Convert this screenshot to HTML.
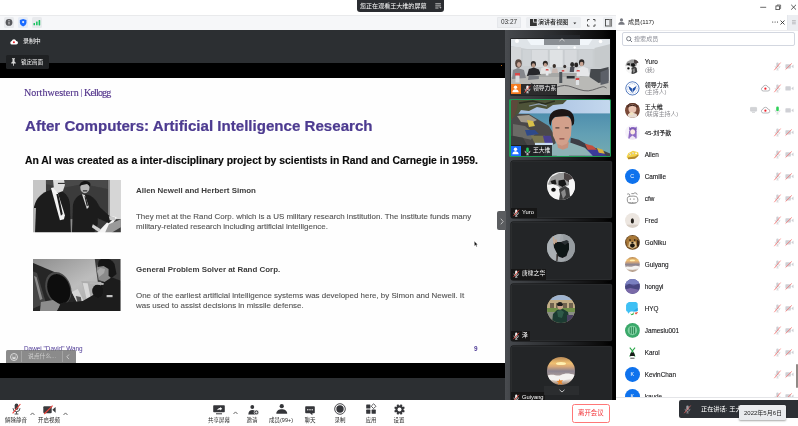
<!DOCTYPE html>
<html lang="zh">
<head>
<meta charset="utf-8">
<title>Meeting</title>
<style>
html,body{margin:0;padding:0;}
body{width:798px;height:426px;overflow:hidden;background:#fff;position:relative;font-family:"Liberation Sans","Noto Sans CJK SC",sans-serif;color:#222;}
.abs{position:absolute;}
.t{position:absolute;white-space:nowrap;line-height:1;}
.t,.bl,.row{will-change:transform;}
svg{position:absolute;overflow:visible;}
/* ---------- top ---------- */
#titlebar{left:0;top:0;width:798px;height:15px;background:#fff;}
#pill{left:357px;top:0;width:87px;height:11.5px;background:#2b2d31;border-radius:0 0 3px 3px;}
#toolbar{left:0;top:15px;width:617px;height:15px;background:#f6f7f9;border-top:1px solid #e9eaec;box-sizing:border-box;}
.tb-box{position:absolute;top:17px;height:10.5px;background:#e8eaed;border-radius:1.5px;}
/* ---------- main ---------- */
#main{left:0;top:30px;width:505px;height:370px;background:#2c2f32;}
#band1{left:0;top:63px;width:505px;height:15px;background:#000;}
#slide{left:0;top:78px;width:505px;height:285px;background:#fefefe;}
#band2{left:0;top:363px;width:505px;height:14.7px;background:#000;}
/* ---------- strip ---------- */
#strip{left:505px;top:30px;width:110.5px;height:370px;background:linear-gradient(to right,#494c50 0,#44474b 4%,#2a2c2f 45%,#0a0a0a 88%,#000 96%);}
.tile{position:absolute;left:510.5px;width:101.1px;height:57.2px;background:#232527;border-radius:2px;box-shadow:0 0 0 .5px #0c0c0c,inset 0 0 0 .6px #313335;overflow:hidden;}
.nm{position:absolute;left:0;bottom:0;height:10.5px;background:rgba(20,20,20,.85);color:#fff;font-size:5.8px;}
/* ---------- panel ---------- */
#panel{left:615.5px;top:15px;width:182.5px;height:411px;background:#fff;}
.row{position:absolute;left:0;width:182.5px;height:22px;}
.row .n{position:absolute;left:28.7px;font-size:6.4px;color:#141416;-webkit-text-stroke:.1px #141416;white-space:nowrap;line-height:1;}
.row .s{position:absolute;left:28.9px;font-size:5.9px;color:#8a8a8f;white-space:nowrap;line-height:1;}
.av{position:absolute;width:14.8px;height:14.8px;border-radius:50%;overflow:hidden;}
/* ---------- bottom ---------- */
#bottom{left:0;top:400px;width:615.5px;height:26px;background:#fff;}
.bl{position:absolute;top:417.9px;font-size:5.5px;color:#2a2a2a;white-space:nowrap;line-height:1;transform:translateX(-50%);}
</style>
</head>
<body>
<!-- TOP TITLE BAR -->
<div class="abs" id="titlebar"></div>
<div class="abs" id="pill"></div>
<div class="t" style="left:360.2px;top:3.1px;font-size:6.05px;color:#fff;">您正在观看王大维的屏幕</div>
<svg style="left:434.5px;top:3px" width="7" height="6" viewBox="0 0 7 6"><path d="M0.3 0.8h5.6M0.3 2.9h5.6M0.3 5h3.2" stroke="#e8e8e8" stroke-width="0.8" fill="none"/><path d="M4.3 4.3h2.2l-1.1 1.3z" fill="#e8e8e8"/></svg>
<!-- window controls -->
<svg style="left:758px;top:3px" width="40" height="9" viewBox="0 0 40 9"><path d="M2.2 4.3h6" stroke="#444" stroke-width="0.8"/><rect x="17.9" y="3" width="3.6" height="3.6" fill="none" stroke="#444" stroke-width="0.8"/><path d="M19 2.8v-.8h3.600v3.600h-.9" fill="none" stroke="#444" stroke-width="0.7"/><path d="M33.2 1.8l4.8 4.8M38 1.8l-4.8 4.8" stroke="#333" stroke-width="0.8"/></svg>

<!-- SECOND TOOLBAR -->
<div class="abs" id="toolbar"></div>
<div class="tb-box" style="left:4.2px;width:9.6px;"></div>
<div class="tb-box" style="left:18.2px;width:9.8px;background:#e6ecf6;"></div>
<div class="tb-box" style="left:32.2px;width:9.6px;"></div>
<svg style="left:0;top:15px" width="60" height="15" viewBox="0 15 60 15">
 <circle cx="9" cy="22.4" r="3.4" fill="#58595c"/><rect x="8.5" y="21.6" width="1" height="2.8" fill="#d8d8da"/><rect x="8.5" y="20" width="1" height="1" fill="#d8d8da"/>
 <path d="M23.15 18.9l3.3 1.1v2.6c0 1.9-1.5 3.2-3.3 3.8-1.8-.6-3.3-1.9-3.3-3.8V20z" fill="#1a6bff"/><circle cx="23.15" cy="22.1" r="1.1" fill="#e6ecf6"/>
 <rect x="33.5" y="22.9" width="1.5" height="2.4" rx=".4" fill="#14c15c"/><rect x="36.1" y="21.4" width="1.5" height="3.9" rx=".4" fill="#14c15c"/><rect x="38.6" y="19.9" width="1.6" height="5.5" rx=".4" fill="#14c15c"/>
</svg>
<!-- right side of toolbar -->
<div class="tb-box" style="left:497px;width:24px;top:17.2px;height:10.4px;background:#eceef1;box-shadow:inset 0 0 0 .5px #dfe1e5;"></div>
<div class="t" style="left:500.6px;top:19.4px;font-size:6.4px;color:#333;">03:27</div>
<div class="tb-box" style="left:526px;width:54.5px;top:17.2px;height:10.4px;background:#eceef1;"></div>
<svg style="left:529.5px;top:19px" width="8" height="7" viewBox="0 0 8 7"><path d="M0 0h3.2v3.6h3.6V7H0z" fill="#333"/><rect x="4" y="0" width="2.8" height="2.8" fill="#333"/></svg>
<div class="t" style="left:538.4px;top:19.2px;font-size:6.05px;color:#222;font-weight:500;">演讲者视图</div>
<svg style="left:573px;top:21.6px" width="4" height="3" viewBox="0 0 4 3"><path d="M0.3 0.4h3L1.8 2.2z" fill="#333"/></svg>
<svg style="left:587px;top:18.8px" width="9" height="8" viewBox="0 0 9 8"><path d="M0.5 2.4V0.5h2M6 0.5h2v1.9M8 5.2v1.9H6M2.5 7.1h-2V5.2" fill="none" stroke="#444" stroke-width="0.9"/></svg>
<div class="tb-box" style="left:602.5px;width:10.5px;top:17.2px;height:10.4px;background:#eceef1;"></div>
<svg style="left:604.5px;top:18.8px" width="7" height="8" viewBox="0 0 7 8"><rect x="0.4" y="0.4" width="6.2" height="6.6" fill="none" stroke="#333" stroke-width="0.8"/><rect x="4.2" y="0.4" width="2.4" height="6.6" fill="#9a9a9a"/></svg>

<!-- MAIN DARK AREA -->
<div class="abs" id="main"></div>
<div class="abs" id="band1"></div>
<div class="abs" id="slide"></div>
<!-- slide content -->
<div class="t" style="left:24.4px;top:88px;font-family:'Liberation Serif',serif;font-size:10.05px;color:#4e2f88;-webkit-text-stroke:.12px #4e2f88;">Northwestern</div>
<div class="abs" style="left:81.1px;top:89px;width:.5px;height:8px;background:#a595c8;"></div>
<div class="t" style="left:83.7px;top:88px;font-family:'Liberation Serif',serif;font-size:10.05px;color:#4e2f88;-webkit-text-stroke:.12px #4e2f88;letter-spacing:-.85px;">Kellogg</div>
<div class="t" style="left:24.8px;top:117.7px;font-size:15.1px;font-weight:bold;color:#4d3b90;-webkit-text-stroke:.22px #4d3b90;">After Computers: Artificial Intelligence Research</div>
<div class="t" style="left:24.8px;top:156.3px;font-size:10.4px;font-weight:bold;color:#0a0a0a;-webkit-text-stroke:.15px #0a0a0a;">An AI was created as a inter-disciplinary project by scientists in Rand and Carnegie in 1959.</div>
<div class="t" style="left:135.7px;top:186.6px;font-size:7.95px;font-weight:bold;color:#3c3c3c;">Allen Newell and Herbert Simon</div>
<div class="t" style="left:135.7px;top:211.9px;font-size:7.95px;line-height:9.75px;color:#515151;-webkit-text-stroke:.1px #515151;white-space:pre;">They met at the Rand Corp. which is a US military research institution. The institute funds many
military-related research including artificial intelligence.</div>
<div class="t" style="left:135.7px;top:266.1px;font-size:7.95px;font-weight:bold;color:#3c3c3c;">General Problem Solver at Rand Corp.</div>
<div class="t" style="left:135.7px;top:291.4px;font-size:7.95px;line-height:9.6px;color:#515151;-webkit-text-stroke:.1px #515151;white-space:pre;">One of the earliest artificial intelligence systems was developed here, by Simon and Newell. It
was used to assist decisions in missile defense.</div>
<div class="t" style="left:24.3px;top:346px;font-size:6.4px;color:#4e3a96;">Dawei "David" Wang</div>
<div class="t" style="left:474.3px;top:346px;font-size:6.4px;font-weight:bold;color:#4e3a96;">9</div>
<!-- cursor -->
<svg style="left:473.600px;top:240.600px" width="4" height="6" viewBox="0 0 4 6"><path d="M.3.2l3.300 3.400-1.300.1.900 1.800-.7.300-.9-1.800-1.100.9z" fill="#111" stroke="#fff" stroke-width=".25"/></svg>
<!-- emoji bar -->
<div class="abs" style="left:6px;top:349.8px;width:69.8px;height:13.2px;background:rgba(120,120,120,.86);border-radius:1.5px 1.5px 0 0;"></div>
<div class="abs" style="left:21.4px;top:351px;width:.6px;height:11px;background:#a4a4a4;"></div>
<div class="abs" style="left:61.5px;top:351px;width:.6px;height:11px;background:#a4a4a4;"></div>
<svg style="left:10.4px;top:352.7px" width="8" height="8" viewBox="0 0 8 8"><circle cx="4" cy="4" r="3.5" fill="none" stroke="#e2e2e2" stroke-width=".9"/><path d="M2.100 4.300h3.800a1.900 1.900 0 0 1-3.800 0z" fill="#e2e2e2"/><circle cx="2.800" cy="2.900" r=".5" fill="#e2e2e2"/><circle cx="5.200" cy="2.900" r=".5" fill="#e2e2e2"/></svg>
<div class="t" style="left:28.200px;top:353.600px;font-size:5.800px;color:#cfcfcf;">说点什么...</div>
<svg style="left:66px;top:354px" width="4" height="6" viewBox="0 0 4 6"><path d="M3 .5L.8 2.800 3 5.100" fill="none" stroke="#d8d8d8" stroke-width=".8"/></svg>
<!-- photo 1 -->
<svg id="ph1" style="left:33.2px;top:180px" width="87.8" height="52.2" viewBox="0 0 88 52" preserveAspectRatio="none">
<defs><filter id="b1" x="-5%" y="-5%" width="110%" height="110%"><feGaussianBlur stdDeviation="0.5"/></filter><clipPath id="c1"><rect width="88" height="52"/></clipPath></defs>
<g clip-path="url(#c1)"><rect width="88" height="52" fill="#c6c6c6"/>
<g filter="url(#b1)">
<rect x="13" y="-1" width="62.5" height="41" fill="#3b3b3b"/>
<path d="M13 -1h62v10L50 4 30 8 13 4z" fill="#484848"/>
<rect x="75.5" y="-1" width="1.6" height="41" fill="#777"/>
<rect x="77" y="-1" width="12" height="40" fill="#d6d6d6"/>
<rect x="34" y="39" width="55" height="14" fill="#3a3a3a"/>
<rect x="34" y="39" width="7" height="14" fill="#8c8c8c"/>
<path d="M64 53l16-17 4 1-10 16z" fill="#f4f4f4"/>
<path d="M76 44l12-5v8l-10 6h-6z" fill="#9a9a9a"/>
<!-- man 2 -->
<path d="M39 53l1-28c1-6 5-10 10-11l6 1c5 2 8 6 11 12l10 9 3 3-4 4-11-5 0 6-4 9z" fill="#1f1f1f"/>
<path d="M49 14l3 1 4 12-2 2z" fill="#d8d8d8"/>
<path d="M51.5 16l1.2 .4 2.4 9-1.2 1z" fill="#222"/>
<ellipse cx="52" cy="7.6" rx="4.6" ry="5.6" fill="#b8b8b8"/>
<path d="M46.6 6c0-5 9-7 11-2l-.4 2.4-3-2.4-5 1z" fill="#161616"/>
<path d="M50 10.8h4.4" stroke="#3a3a3a" stroke-width="1.3"/>
<path d="M60 44l8 5-2 3-7-5z" fill="#d0d0d0"/>
<path d="M76 36l6 1 1 3-6 0z" fill="#c8c8c8"/>
<!-- man 1 -->
<path d="M0 53l1-26C3 18 9 12 18 10l10 1c5 2 8 6 9 13l1 29z" fill="#1b1b1b"/>
<path d="M18 8l5-1 9 28-1 4-4 1z" fill="#f3f3f3"/>
<path d="M23.4 14l2 0 4.400 20-1.8 1.600z" fill="#1c1c1c"/>
<path d="M20 -1h11l1 6-2 6-5 2-4-4z" fill="#dedede"/>
<path d="M25 3.400h7" stroke="#2a2a2a" stroke-width="1.100"/>
<path d="M0 28l3 0 -1 25H0z" fill="#b5b5b5"/>
</g></g></svg>
<!-- photo 2 -->
<svg id="ph2" style="left:33.4px;top:259px" width="87.5" height="52" viewBox="0 0 88 52" preserveAspectRatio="none">
<defs><clipPath id="c2"><rect width="88" height="52"/></clipPath>
<linearGradient id="g2" x1="0" y1="0" x2="1" y2="1"><stop offset="0" stop-color="#8d8d8d"/><stop offset=".5" stop-color="#bdbdbd"/><stop offset="1" stop-color="#a2a2a2"/></linearGradient></defs>
<g clip-path="url(#c2)"><rect width="88" height="52" fill="url(#g2)"/>
<g filter="url(#b1)">
<path d="M62 -1h27v30H66z" fill="#3a3a3a"/>
<!-- console -->
<path d="M-1 3.500l32 13.500 16 32-4 5H-1z" fill="#272727"/>
<path d="M-1 12l5 2 9 30-14 6z" fill="#444"/>
<path d="M1 17l2.500 1 6 22-2.500 1z" fill="#c9c9c9" opacity=".55"/>
<ellipse cx="25.500" cy="29.500" rx="12.600" ry="17" fill="#4a4a4a" transform="rotate(-20 25.500 29.500)"/>
<ellipse cx="26" cy="30" rx="11.200" ry="15.400" fill="#101010" transform="rotate(-20 26 30)"/>
<path d="M8 43l12-2 8 5-4 6H7z" fill="#8c8c8c"/>
<!-- second console -->
<path d="M48.500 22l20 1 3 17-16 3z" fill="#adadad"/>
<path d="M50 24l5 .300 3 15-4 1z" fill="#d8d8d8"/>
<path d="M39 33l6-3 6 12-6 3z" fill="#d6d6d6"/>
<path d="M43 37l5 1 1 5-4 1z" fill="#555"/>
<!-- man -->
<path d="M24 53l4-9 22-2 14-8 6-12 8-4 11 4v31z" fill="#1c1c1c"/>
<path d="M64 10c0-5 5-8 10-7l4 6 0 10-6 4-6-2-1-5z" fill="#8a8a8a"/>
<path d="M64.500 12l3-3 5 1-1 4-5 4z" fill="#a8a8a8"/>
<path d="M66 2c4-4 13-3 16 3l2 10-5 4-3-2 0-7-5-3-6 1z" fill="#181818"/>
<path d="M74 36h6v2.200h-6z" fill="#c2c2c2"/>
<ellipse cx="65" cy="32" rx="5.500" ry="6.500" fill="#151515"/><path d="M57 24l14 1" stroke="#b5b5b5" stroke-width="2"/>
</g></g></svg>
<div class="abs" id="band2"></div>
<div class="abs" style="left:500.8px;top:64.8px;width:1.6px;height:1.6px;border-radius:50%;background:#f08a24;"></div>
<!-- recording indicator -->
<svg style="left:9.9px;top:38.9px" width="8" height="5.8" viewBox="0 0 9 6.5"><path d="M2.2 6.2a2 2 0 0 1-.3-3.95A2.7 2.7 0 0 1 7 2.1a2.05 2.05 0 0 1-.1 4.1z" fill="#fff"/><circle cx="4.4" cy="3.7" r="1.15" fill="#e8212b"/></svg>
<div class="t" style="left:23.4px;top:39.3px;font-size:5.9px;color:#fff;">录制中</div>
<!-- pin tooltip -->
<div class="abs" style="left:5.6px;top:55px;width:43px;height:14.2px;background:#1f2123;border-radius:1.5px;"></div>
<svg style="left:11px;top:58.2px" width="5" height="8" viewBox="0 0 5 8"><path d="M1 0.2h3v0.8H3.5v2.6l1.3 1.2v0.6H2.9V7.6L2.5 8l-.4-.4V5.4H0.2v-.6l1.3-1.2V1H1z" fill="#d8d8d8"/></svg>
<div class="t" style="left:21px;top:60px;font-size:5.5px;color:#fff;">锁定画面</div>

<!-- VIDEO STRIP -->
<div class="abs" id="strip"></div>
<!-- tile 1 : conference room -->
<div class="tile" style="top:38.5px;left:510.5px;width:99.5px;height:56px;border-radius:0;">
<svg style="left:0;top:0" width="99.5" height="56" viewBox="0 0 100 56" preserveAspectRatio="none">
<defs><filter id="b2" x="-5%" y="-5%" width="110%" height="110%"><feGaussianBlur stdDeviation="0.7"/></filter></defs>
<rect width="100" height="56" fill="#c9cdd0"/>
<g filter="url(#b2)">
<path d="M0 0h100v6L84 10H16L0 7z" fill="#dfe4e8"/>
<path d="M16 0h66l-4 6H20z" fill="#f1f6fa"/>
<circle cx="6" cy="2" r="2" fill="#fff"/><circle cx="90" cy="2.500" r="1.800" fill="#fff"/><circle cx="48" cy="8.500" r="1.200" fill="#fff"/><circle cx="64" cy="8.500" r="1.200" fill="#fff"/>
<rect x="0" y="8" width="10" height="22" fill="#d4d7d9"/>
<rect x="12" y="11" width="8" height="16" fill="#cfd3d6"/>
<rect x="21" y="11" width="16" height="17" fill="#d9dcdf"/>
<rect x="39" y="11" width="13" height="17" fill="#dfe2e4"/>
<rect x="54" y="11" width="12" height="17" fill="#d6d9dc"/>
<rect x="68" y="11" width="14" height="17" fill="#cdd1d4"/>
<path d="M84 9l16-4v26l-16-3z" fill="#c6cacc"/>
<!-- table -->
<path d="M0 38l30-4h44l26 8v14H0z" fill="#b9b9b6"/>
<path d="M30 34h44l10 4H16z" fill="#a7a8a6"/>
<!-- people -->
<ellipse cx="7.500" cy="24.500" rx="3.300" ry="4.200" fill="#5a4840"/><ellipse cx="8" cy="25.500" rx="2" ry="2.600" fill="#c9a596"/>
<path d="M1 40l1-9 5-2 6 2 2 8z" fill="#85878c"/>
<ellipse cx="22.500" cy="25" rx="2.600" ry="3" fill="#2c2826"/><ellipse cx="22.500" cy="26.500" rx="1.800" ry="2.200" fill="#b99886"/>
<path d="M16 37l2-7 5-1.500 5 2 2 5z" fill="#26282c"/>
<ellipse cx="34.500" cy="24.500" rx="2.500" ry="2.800" fill="#2a2624"/><ellipse cx="34.500" cy="26" rx="1.700" ry="2" fill="#c09c8a"/>
<path d="M29 35l1.500-6 4-1.500 4.500 2 1.500 5z" fill="#e4e4e2"/>
<ellipse cx="43.500" cy="27" rx="1.700" ry="2" fill="#3a302c"/><path d="M41 34l.8-4.500h4.600l1 4.500z" fill="#c8b8b2"/>
<ellipse cx="54" cy="27.500" rx="1.500" ry="1.800" fill="#3a3432"/><path d="M52 33l.5-3.500h3.400l.6 3.500z" fill="#d6cfcb"/>
<ellipse cx="61.500" cy="25.500" rx="2" ry="2.500" fill="#2c2a2a"/><path d="M59 33l.5-5h4.500l1 5z" fill="#4a4c52"/>
<ellipse cx="65.500" cy="26" rx="2" ry="2.400" fill="#262424"/><path d="M63 34l.8-5.500h4.600l1 5.500z" fill="#d9dadc"/>
<ellipse cx="71" cy="23.500" rx="2.700" ry="3.200" fill="#2a2626"/><ellipse cx="71" cy="25" rx="1.900" ry="2.300" fill="#c7a392"/>
<path d="M66 37l2-8 4.500-1.500 5 2 1.500 8z" fill="#e6e7e9"/>
<!-- chairs right -->
<path d="M80 30h10l8-2v14l-10 2-9-6z" fill="#45484d"/>
<path d="M90 33l8-3v14l-8 2z" fill="#5c6067"/>
<!-- bottles / red bits -->
<rect x="4" y="34" width="5" height="3" fill="#d84848"/><rect x="4.500" y="36.500" width="4" height="7" fill="#d9dde0"/>
<rect x="35" y="30" width="2.600" height="2" fill="#d65050"/><rect x="35" y="31.500" width="2.600" height="5" fill="#e6e8ea"/>
<rect x="66" y="31" width="3" height="2" fill="#d65050"/><rect x="66" y="32.500" width="3" height="5" fill="#e3e5e8"/>
<rect x="65" y="39" width="3.600" height="2.500" fill="#d44a4a"/><rect x="65.200" y="41" width="3.200" height="5" fill="#dfe2e5"/>
<rect x="51" y="31" width="2.500" height="1.600" fill="#d65050"/>
<!-- center equipment / cable -->
<rect x="48.500" y="33" width="3" height="11" fill="#50545a"/>
<path d="M56 37h8v2.500h-8z" fill="#2c2e32"/>
<path d="M18 36l10 1 0 3-11 1z" fill="#777a80"/>
<path d="M20 44c10 8 20 6 30 3s20 8 32 4 10-4 14-2" fill="none" stroke="#4a4a4c" stroke-width=".8"/>
</g>
</svg>
<div class="abs" style="left:0;bottom:0;width:46px;height:10.800px;background:rgba(24,24,26,.88);"></div>
<div class="abs" style="left:.300px;bottom:.600px;width:10px;height:9.800px;background:#f47b20;"></div>
<svg style="left:1.800px;top:46.500px" width="7" height="8" viewBox="0 0 7 8"><circle cx="3.500" cy="2.300" r="1.700" fill="#fff"/><path d="M.3 7.300C.3 5 2 4.200 3.500 4.200s3.200.8 3.200 3.100z" fill="#fff"/></svg>
<svg class="mic-m" style="left:13px;top:46.300px" width="7" height="8.500" viewBox="0 0 7 8.500"><rect x="2.300" y=".5" width="2.400" height="4.600" rx="1.200" fill="#f2f2f2"/><path d="M1 3.800a2.500 2.500 0 0 0 5 0M3.500 6.300v1.400M2.200 7.800h2.600" fill="none" stroke="#f2f2f2" stroke-width=".7"/><path d="M.4 7.600L6.400.8" stroke="#f0453a" stroke-width=".9"/></svg>
<div class="t" style="left:22.600px;top:47.800px;font-size:5.800px;color:#fff;">领导力系</div>
</div>
<!-- collapse handle -->
<div class="abs" style="left:544.100px;top:34.500px;width:36px;height:10.200px;background:rgba(44,48,54,.52);"></div>
<svg style="left:559px;top:37.900px" width="6" height="4" viewBox="0 0 6 4"><path d="M.5 3L3 .8 5.500 3" fill="none" stroke="#e4e4e4" stroke-width=".8"/></svg>
<!-- tile 2 : beach speaker -->
<div class="abs" style="left:509.300px;top:99.300px;width:102.200px;height:58px;background:#1f9a55;border-radius:1.500px;"></div>
<div class="tile" style="top:100.400px;left:510.500px;width:99.800px;height:55.800px;border-radius:.5px;box-shadow:none;">
<svg style="left:0;top:0" width="99.800" height="55.800" viewBox="0 0 100 56" preserveAspectRatio="none">
<defs><linearGradient id="sky" x1="0" y1="0" x2="1" y2="0"><stop offset="0" stop-color="#9fb9dc"/><stop offset="1" stop-color="#c4d8ee"/></linearGradient>
<linearGradient id="sea" x1="0" y1="0" x2="0" y2="1"><stop offset="0" stop-color="#4f8fae"/><stop offset=".5" stop-color="#63a0b4"/><stop offset="1" stop-color="#74aab0"/></linearGradient></defs>
<rect width="100" height="14" fill="url(#sky)"/>
<rect y="13.500" width="100" height="43" fill="url(#sea)"/>
<g filter="url(#b2)">
<!-- tree -->
<path d="M0 0h56l-4 4-10 1-6 4-10-2-8 4-8-1-4 6-6 4z" fill="#4e5238"/>
<path d="M0 0h7l-1 8-3 10-3 2z" fill="#5d4a3a"/>
<path d="M8 3l14-2 12 3 10-3" fill="none" stroke="#2c2f20" stroke-width="1.500"/>
<path d="M18 6l10-2 8 2" fill="none" stroke="#8fa0b0" stroke-width="1.200"/>
<!-- rocks left -->
<path d="M0 20l6-6 12 0 10 6 10 6 6 10 2 20H0z" fill="#4b4a48"/>
<path d="M6 16l12-1 8 5-6 3-10-1z" fill="#a39a8c"/>
<path d="M2 24l12 2 10 8-4 6-18-4z" fill="#6a6a66"/>
<path d="M16 20l6 1 2 5-6 1z" fill="#d8c048"/>
<path d="M14 30l10 0 4 4-12 2z" fill="#2f4a8a"/>
<path d="M20 36l14 0 6 8-14 4z" fill="#7a7650"/>
<path d="M32 36l8 0 2 8-8 0z" fill="#4a3f90"/>
<path d="M0 36l12 2 10 18H0z" fill="#3a3c3e"/>
<path d="M24 43h18v2.500H24z" fill="#c8dcf0"/>
<!-- rocks right -->
<path d="M60 38l8 2 10 6 12 4 10 4v3H58z" fill="#3c3c44"/>
<path d="M74 44l8 2 6 6-10 0z" fill="#c4503c"/>
<path d="M76 50l12 0 8 6H74z" fill="#3a3a9a"/>
<path d="M86 48l6 2 2 4-6-1z" fill="#d8b040"/>
<!-- person -->
<path d="M33 56l3-8 10-5h14l14 5 8 8z" fill="#8eb2b6"/>
<path d="M46 42h12l-1 6-5 2-5-2z" fill="#c7917c"/>
<path d="M41 22c0-8 20-8 20 0l-1 14-4 8-5 2-5-2-4-8z" fill="#d2a08b"/>
<path d="M38.500 24c-2-10 4-15 12.500-15s14 5 12 15l-2 2c0-6-2-9-4-10l-13 1c-3 2-4 5-4 9z" fill="#1b1718"/>
<path d="M44.500 28h4M54 28h4" stroke="#3a2a26" stroke-width="1"/>
<path d="M48.500 39h5" stroke="#8a4a44" stroke-width="1.200"/>
</g>
</svg>
<div class="abs" style="left:0;bottom:0;width:41px;height:10.800px;background:rgba(26,28,30,.85);"></div>
<div class="abs" style="left:.300px;bottom:.500px;width:10px;height:9.800px;background:#1a6dff;"></div>
<svg style="left:1.800px;top:46.300px" width="7" height="8" viewBox="0 0 7 8"><circle cx="3.500" cy="2.300" r="1.700" fill="#fff"/><path d="M.3 7.300C.3 5 2 4.200 3.500 4.200s3.200.8 3.200 3.100z" fill="#fff"/></svg>
<svg style="left:13px;top:46.200px" width="7" height="8.500" viewBox="0 0 7 8.500"><rect x="2.200" y=".4" width="2.600" height="4.800" rx="1.300" fill="#21c45a"/><path d="M1 3.800a2.500 2.500 0 0 0 5 0M3.500 6.300v1.400M2.200 7.800h2.600" fill="none" stroke="#f2f2f2" stroke-width=".7"/></svg>
<div class="t" style="left:22.600px;top:47.600px;font-size:5.800px;color:#fff;">王大维</div>
</div>

<div class="tile" style="top:161.2px;">
<svg style="left:36px;top:11.200px" width="28" height="28" viewBox="0 0 28 28"><defs><clipPath id="cy"><circle cx="14" cy="14" r="14"/></clipPath></defs><g clip-path="url(#cy)"><rect width="28" height="28" fill="#f3f3f3"/><g filter="url(#b2)">
<path d="M1 12l3-7 8-4 8 0 4 4-2 8-8 4-10 0z" fill="#9b9b9b"/>
<path d="M17 1l6 1 3 5-3 4-6-4z" fill="#4a4242"/>
<path d="M3.500 9l5-1.500 1 4.500-4 1.500z" fill="#1e1e1e"/>
<path d="M11.500 8.500l6-1 2 5-4 2.500-4-2z" fill="#161616"/>
<path d="M1 13l5-1 5 2 4 4-1 7-6 2-6-4z" fill="#f5f5f5"/>
<ellipse cx="6.500" cy="17.800" rx="2.300" ry="2" fill="#0e0e0e"/>
<path d="M12 17l6-3 5 3 1 8-6 4-6-1 1-6z" fill="#3c3c3c"/>
<path d="M14 20l4-3 1 6-3 4z" fill="#8a8a8a"/>
<path d="M22 8l6-2 0 18-5 0-1-8z" fill="#f6f6f6"/>
</g></g></svg>
<div class="nm" style="width:26px;"><svg style="left:2.800px;top:1.400px" width="6.500" height="8" viewBox="0 0 7 8.500"><rect x="2.300" y=".5" width="2.400" height="4.600" rx="1.200" fill="#f2f2f2"/><path d="M1 3.800a2.500 2.500 0 0 0 5 0M3.500 6.300v1.400M2.200 7.800h2.600" fill="none" stroke="#f2f2f2" stroke-width=".7"/><path d="M.4 7.600L6.400.8" stroke="#f0453a" stroke-width=".9"/></svg><span class="t" style="left:11.600px;top:2.400px;">Yuro</span></div>
</div>
<div class="tile" style="top:222.4px;">
<svg style="left:36px;top:11.200px" width="28" height="28" viewBox="0 0 28 28"><defs><clipPath id="ct"><circle cx="14" cy="14" r="14"/></clipPath></defs><g clip-path="url(#ct)"><rect width="28" height="28" fill="#a1a7ab"/><g filter="url(#b2)">
<path d="M0 0h14l-6 28H0z" fill="#aab0b4"/>
<path d="M16 0h12v28H18z" fill="#969ca0"/>
<path d="M6.500 9.500l3-1.500 5 0 5-1.500 2.500 3 0 6-1.500 3.500-1 3-4 2-4-1.500-2.500-5-2-4z" fill="#111316"/>
<path d="M14 8l6-2 2 2-4 3z" fill="#2c3034"/>
<path d="M5.800 3l1.200 0 1.200 7-1.500 .5z" fill="#c9a98e"/>
<path d="M8 5.500l1.800 0 .3 3-1.800 .5z" fill="#c4a288"/>
<path d="M9.500 20l1.600 0 -.6 7-1.200 0z" fill="#2a2624"/>
</g></g></svg>
<div class="nm" style="width:35.5px;"><svg style="left:2.800px;top:1.400px" width="6.500" height="8" viewBox="0 0 7 8.500"><rect x="2.300" y=".5" width="2.400" height="4.600" rx="1.200" fill="#f2f2f2"/><path d="M1 3.800a2.500 2.500 0 0 0 5 0M3.500 6.300v1.400M2.200 7.800h2.600" fill="none" stroke="#f2f2f2" stroke-width=".7"/><path d="M.4 7.600L6.400.8" stroke="#f0453a" stroke-width=".9"/></svg><span class="t" style="left:11.600px;top:2.400px;">唐棣之华</span></div>
</div>
<div class="tile" style="top:284.2px;">
<svg style="left:36px;top:11.200px" width="28" height="28" viewBox="0 0 28 28"><defs><clipPath id="cz"><circle cx="14" cy="14" r="14"/></clipPath></defs><g clip-path="url(#cz)"><rect width="28" height="28" fill="#b9a98a"/><g filter="url(#b2)">
<rect x="0" y="0" width="28" height="6" fill="#9fb4d0"/>
<rect x="0" y="5" width="28" height="9" fill="#c2ad86"/>
<path d="M3 8h4v5H3zM9 8h4v5H9zM16 8h4v5h-4zM22 8h4v5h-4z" fill="#6f6450"/>
<rect x="0" y="13" width="28" height="5" fill="#6f8f4a"/>
<rect x="0" y="17" width="28" height="11" fill="#8a8f86"/>
<path d="M5 28l1-9 4-4 6-1 5 3 2 11z" fill="#1d3a30"/>
<path d="M10 16l4-1 3 2-2 6-4-1z" fill="#2f5a48"/>
<ellipse cx="13" cy="11.500" rx="2.600" ry="3" fill="#c9a088"/>
<path d="M10 10c0-4 6-4 6 0l-1 1h-4z" fill="#1a1a1a"/>
<path d="M20 20l6 0 2 8h-8z" fill="#4a4060"/>
</g></g></svg>
<div class="nm" style="width:19.2px;"><svg style="left:2.800px;top:1.400px" width="6.500" height="8" viewBox="0 0 7 8.500"><rect x="2.300" y=".5" width="2.400" height="4.600" rx="1.200" fill="#f2f2f2"/><path d="M1 3.800a2.500 2.500 0 0 0 5 0M3.500 6.300v1.400M2.200 7.800h2.600" fill="none" stroke="#f2f2f2" stroke-width=".7"/><path d="M.4 7.600L6.400.8" stroke="#f0453a" stroke-width=".9"/></svg><span class="t" style="left:11.600px;top:2.400px;">泽</span></div>
</div>
<div class="tile" style="top:345.8px;">
<svg style="left:36px;top:11.200px" width="28" height="28" viewBox="0 0 28 28"><defs><clipPath id="cg"><circle cx="14" cy="14" r="14"/></clipPath>
<linearGradient id="sun" x1="0" y1="0" x2="0" y2="1"><stop offset="0" stop-color="#b98a58"/><stop offset=".22" stop-color="#f0c070"/><stop offset=".34" stop-color="#d8a878"/><stop offset=".5" stop-color="#8c8490"/><stop offset=".66" stop-color="#a89a98"/><stop offset=".8" stop-color="#e6e0dc"/><stop offset="1" stop-color="#9a7a60"/></linearGradient></defs>
<g clip-path="url(#cg)"><rect width="28" height="28" fill="url(#sun)"/><g filter="url(#b2)">
<ellipse cx="14" cy="6.500" rx="5" ry="1.600" fill="#fff0b0"/>
<path d="M0 19c6-3 10 1 14-1s8-2 14 0v4c-6-1-10 2-14 2S4 22 0 23z" fill="#f4f2f0"/>
<path d="M12 22l1.500 1.500 2.500-.5-1.500 2 1 2.500-2.500-1-2 1.500.5-2.500-2-1.500 2.500-.300z" fill="#e8862a"/>
</g></g></svg>
<div class="nm" style="width:34.5px;"><svg style="left:2.800px;top:1.400px" width="6.500" height="8" viewBox="0 0 7 8.500"><rect x="2.300" y=".5" width="2.400" height="4.600" rx="1.200" fill="#f2f2f2"/><path d="M1 3.800a2.500 2.500 0 0 0 5 0M3.500 6.300v1.400M2.200 7.800h2.600" fill="none" stroke="#f2f2f2" stroke-width=".7"/><path d="M.4 7.600L6.400.8" stroke="#f0453a" stroke-width=".9"/></svg><span class="t" style="left:11.600px;top:2.400px;">Guiyang</span></div>
</div>
<!-- side handle -->
<div class="abs" style="left:497.400px;top:211px;width:8.600px;height:19.400px;background:#5b5d60;border-radius:2px 0 0 2px;"></div>
<svg style="left:499.800px;top:217.500px" width="4" height="7" viewBox="0 0 4 7"><path d="M.8.7L3.200 3.500.8 6.300" fill="none" stroke="#d0d0d0" stroke-width=".8"/></svg>
<!-- down handle -->
<div class="abs" style="left:543.700px;top:385.500px;width:35.700px;height:9.200px;background:rgba(44,46,48,.92);"></div>
<svg style="left:558.500px;top:388.600px" width="6" height="4" viewBox="0 0 6 4"><path d="M.5 .8L3 3 5.500 .8" fill="none" stroke="#e4e4e4" stroke-width=".8"/></svg>
<!-- MEMBER PANEL -->
<div class="abs" id="panel"></div>
<!-- panel header -->
<svg style="left:618.300px;top:18.300px" width="7" height="7" viewBox="0 0 7 7"><circle cx="3.500" cy="1.900" r="1.600" fill="#777980"/><path d="M.3 6.700C.3 4.500 2 3.800 3.500 3.800s3.200.7 3.200 2.900z" fill="#777980"/></svg>
<div class="t" style="left:628.300px;top:19px;font-size:6.100px;color:#222;">成员(117)</div>
<svg style="left:772px;top:21.300px" width="6" height="2" viewBox="0 0 6 2"><circle cx=".7" cy="1" r=".58" fill="#2a2a2a"/><circle cx="3.100" cy="1" r=".58" fill="#2a2a2a"/><circle cx="5.500" cy="1" r=".58" fill="#2a2a2a"/></svg>
<svg style="left:780.300px;top:20px" width="5" height="5" viewBox="0 0 5 5"><path d="M.5.5l4 4M4.500.5l-4 4" stroke="#222" stroke-width=".8"/></svg>
<div class="abs" style="left:787.300px;top:15.300px;width:10.700px;height:14.500px;background:#eceef2;box-shadow:inset .5px 0 0 #dcdfe6;"></div>
<svg style="left:792.200px;top:20px" width="4" height="5" viewBox="0 0 4 5"><path d="M0 .6h3.800M0 2.200h3.800M0 3.800h3.800" stroke="#a8a8ac" stroke-width=".7"/></svg>
<div class="abs" style="left:615.500px;top:30px;width:182.500px;height:.5px;background:#ececee;"></div>
<div class="abs" style="left:621.800px;top:31.700px;width:173.400px;height:14.800px;box-sizing:border-box;border:.7px solid #d3d7e0;border-radius:2px;background:#fff;"></div>
<svg style="left:625.800px;top:36px" width="6.500" height="6.500" viewBox="0 0 6.500 6.500"><circle cx="2.700" cy="2.700" r="2.100" fill="none" stroke="#5a5f6a" stroke-width=".8"/><path d="M4.300 4.300L6 6" stroke="#5a5f6a" stroke-width=".9"/></svg>
<div class="t" style="left:633.600px;top:36px;font-size:6.100px;color:#8e9099;">搜索成员</div>
<div class="row" style="left:615.500px;top:55.3px;"><div class="av" style="left:9.300px;top:3.900px;background:#fff;"><svg style="left:0;top:0" width="14.800" height="14.800" viewBox="0 0 28 28"><rect width="28" height="28" fill="#f3f3f3"/><g filter="url(#b2)">
<path d="M1 12l3-7 8-4 8 0 4 4-2 8-8 4-10 0z" fill="#9b9b9b"/>
<path d="M17 1l6 1 3 5-3 4-6-4z" fill="#4a4242"/>
<path d="M3.500 9l5-1.500 1 4.500-4 1.500z" fill="#1e1e1e"/>
<path d="M11.500 8.500l6-1 2 5-4 2.500-4-2z" fill="#161616"/>
<path d="M1 13l5-1 5 2 4 4-1 7-6 2-6-4z" fill="#f5f5f5"/>
<ellipse cx="6.500" cy="17.800" rx="2.300" ry="2" fill="#0e0e0e"/>
<path d="M12 17l6-3 5 3 1 8-6 4-6-1 1-6z" fill="#3c3c3c"/>
<path d="M14 20l4-3 1 6-3 4z" fill="#8a8a8a"/>
<path d="M22 8l6-2 0 18-5 0-1-8z" fill="#f6f6f6"/>
</g></svg></div><span class="n" style="top:4.1px;">Yuro</span><span class="s" style="top:12.9px;">(我)</span></div>
<svg style="left:773.5px;top:61.5px" width="7" height="9" viewBox="0 0 7 9"><rect x="2.300" y=".6" width="2.400" height="4.600" rx="1.200" fill="#cdced3"/><path d="M1 3.900a2.500 2.500 0 0 0 5 0M3.500 6.400v1.500M2.300 8h2.400" fill="none" stroke="#cdced3" stroke-width=".7"/><path d="M.3 8.200L6.600.6" stroke="#f66a68" stroke-width=".75"/></svg>
<svg style="left:784.6px;top:62.6px" width="9" height="7" viewBox="0 0 9 7"><rect x=".4" y="1.200" width="5.400" height="4.400" rx=".7" fill="#cfd0d5"/><path d="M6.300 3.400L8.500 1.600v3.600z" fill="#cfd0d5"/><path d="M.6 6.500L6.800.4" stroke="#f66a68" stroke-width=".75"/></svg>
<div class="row" style="left:615.500px;top:77.3px;"><div class="av" style="left:9.300px;top:3.900px;background:#fff;"><svg style="left:0;top:0" width="14.800" height="14.800" viewBox="0 0 28 28"><rect width="28" height="28" fill="#fff"/><circle cx="14" cy="14" r="12.600" fill="none" stroke="#2b5bb0" stroke-width="1.600"/><circle cx="14" cy="14" r="9" fill="none" stroke="#6d8fce" stroke-width="1" stroke-dasharray="2 1.400"/><path d="M6.500 9.500l7.500 5 7.500-5-2 6.500-5.500 6-5.500-6z" fill="#1f4fa8"/><path d="M14 13v8" stroke="#fff" stroke-width="1"/></svg></div><span class="n" style="top:4.6px;font-size:6px;">领导力系</span><span class="s" style="top:12.9px;">(主持人)</span></div>
<svg style="left:760.5px;top:85.1px" width="9" height="6.500" viewBox="0 0 9 6.500"><path d="M2.200 6a1.900 1.900 0 0 1-.3-3.750A2.600 2.600 0 0 1 6.900 2.100a1.950 1.950 0 0 1-.1 3.900z" fill="#fff" stroke="#8a8b90" stroke-width=".6"/><circle cx="4.400" cy="3.700" r="1.100" fill="#f0222c"/></svg>
<svg style="left:773.5px;top:83.5px" width="7" height="9" viewBox="0 0 7 9"><rect x="2.300" y=".6" width="2.400" height="4.600" rx="1.200" fill="#cdced3"/><path d="M1 3.900a2.500 2.500 0 0 0 5 0M3.500 6.400v1.500M2.300 8h2.400" fill="none" stroke="#cdced3" stroke-width=".7"/><path d="M.3 8.200L6.600.6" stroke="#f66a68" stroke-width=".75"/></svg>
<svg style="left:784.6px;top:84.6px" width="9" height="7" viewBox="0 0 9 7"><rect x=".4" y="1.200" width="5.400" height="4.400" rx=".7" fill="#cfd0d5"/><path d="M6.300 3.400L8.500 1.600v3.600z" fill="#cfd0d5"/></svg>
<div class="row" style="left:615.500px;top:99.3px;"><div class="av" style="left:9.300px;top:3.900px;background:#fff;"><svg style="left:0;top:0" width="14.800" height="14.800" viewBox="0 0 28 28"><rect width="28" height="28" fill="#7a4a38"/><g filter="url(#b2)"><path d="M0 0h28v8H0z" fill="#5a3428"/><ellipse cx="14" cy="11" rx="7.500" ry="8" fill="#e9c4b2"/><path d="M5 10c0-9 18-9 18 0l-2-3-7-2-7 2z" fill="#3a221c"/><path d="M4 28l2-7 8-3 8 3 2 7z" fill="#e8dcd2"/><ellipse cx="12" cy="20" rx="4" ry="3" fill="#f2e2c0"/></g></svg></div><span class="n" style="top:4.6px;font-size:6px;">王大维</span><span class="s" style="top:12.9px;">(联席主持人)</span></div>
<svg style="left:749.6px;top:107.3px" width="7" height="6" viewBox="0 0 7 6"><rect x=".4" y=".4" width="6.200" height="3.800" rx=".4" fill="#d2d3d6" stroke="#bfc0c4" stroke-width=".5"/><path d="M2 5.400h3" stroke="#c4c5c9" stroke-width=".7"/></svg>
<svg style="left:760.5px;top:107.1px" width="9" height="6.500" viewBox="0 0 9 6.500"><path d="M2.200 6a1.900 1.900 0 0 1-.3-3.750A2.600 2.600 0 0 1 6.900 2.100a1.950 1.950 0 0 1-.1 3.900z" fill="#fff" stroke="#8a8b90" stroke-width=".6"/><circle cx="4.400" cy="3.700" r="1.100" fill="#f0222c"/></svg>
<svg style="left:773.5px;top:105.5px" width="7" height="9" viewBox="0 0 7 9"><rect x="2.200" y=".5" width="2.600" height="4.800" rx="1.300" fill="#2fd158"/><path d="M1 3.900a2.500 2.500 0 0 0 5 0M3.500 6.400v1.500M2.300 8h2.400" fill="none" stroke="#cdced3" stroke-width=".7"/></svg>
<svg style="left:784.6px;top:106.6px" width="9" height="7" viewBox="0 0 9 7"><rect x=".4" y="1.200" width="5.400" height="4.400" rx=".7" fill="#cfd0d5"/><path d="M6.300 3.400L8.500 1.600v3.600z" fill="#cfd0d5"/></svg>
<div class="row" style="left:615.500px;top:121.3px;"><div class="av" style="left:9.300px;top:3.900px;background:#fff;"><svg style="left:0;top:0" width="14.800" height="14.800" viewBox="0 0 28 28"><rect width="28" height="28" fill="#f6f2fa"/><g filter="url(#b2)"><path d="M6 26l2-14 4-8 6 0 4 8 0 14z" fill="#8f6cc4"/><path d="M8 4l4 2 6 0 4-3 0 7-3 2-8 0-3-3z" fill="#7a58b4"/><ellipse cx="14.500" cy="13" rx="4.500" ry="5" fill="#fbe9e2"/><path d="M9 24l5-4 6 4 0 4H8z" fill="#efe6f4"/></g></svg></div><span class="n" style="top:9.1px;font-size:6px;">45-刘予歆</span></div>
<svg style="left:773.5px;top:127.5px" width="7" height="9" viewBox="0 0 7 9"><rect x="2.300" y=".6" width="2.400" height="4.600" rx="1.200" fill="#cdced3"/><path d="M1 3.900a2.500 2.500 0 0 0 5 0M3.500 6.400v1.500M2.300 8h2.400" fill="none" stroke="#cdced3" stroke-width=".7"/><path d="M.3 8.200L6.600.6" stroke="#f66a68" stroke-width=".75"/></svg>
<svg style="left:784.6px;top:128.6px" width="9" height="7" viewBox="0 0 9 7"><rect x=".4" y="1.200" width="5.400" height="4.400" rx=".7" fill="#cfd0d5"/><path d="M6.300 3.400L8.500 1.600v3.600z" fill="#cfd0d5"/><path d="M.6 6.500L6.800.4" stroke="#f66a68" stroke-width=".75"/></svg>
<div class="row" style="left:615.500px;top:143.3px;"><div class="av" style="left:9.300px;top:3.900px;background:#fff;"><svg style="left:0;top:0" width="14.800" height="14.800" viewBox="0 0 28 28"><rect width="28" height="28" fill="#fff"/><g filter="url(#b2)"><path d="M3 19l3-7 9-5 10 3 1 6-6 5-13 2z" fill="#f2d24a"/><path d="M5 20l14-2 6-4 0 3-6 5-13 1z" fill="#b58a2a"/><circle cx="9" cy="14" r="1.800" fill="#fff"/><circle cx="15" cy="12" r="1.800" fill="#fff"/><circle cx="21" cy="12" r="1.600" fill="#fff"/><circle cx="9" cy="14" r=".8" fill="#333"/><circle cx="15" cy="12" r=".8" fill="#333"/></g></svg></div><span class="n" style="top:8.9px;">Allen</span></div>
<svg style="left:773.5px;top:149.5px" width="7" height="9" viewBox="0 0 7 9"><rect x="2.300" y=".6" width="2.400" height="4.600" rx="1.200" fill="#cdced3"/><path d="M1 3.900a2.500 2.500 0 0 0 5 0M3.500 6.400v1.500M2.300 8h2.400" fill="none" stroke="#cdced3" stroke-width=".7"/><path d="M.3 8.200L6.600.6" stroke="#f66a68" stroke-width=".75"/></svg>
<svg style="left:784.6px;top:150.6px" width="9" height="7" viewBox="0 0 9 7"><rect x=".4" y="1.200" width="5.400" height="4.400" rx=".7" fill="#cfd0d5"/><path d="M6.300 3.400L8.500 1.600v3.600z" fill="#cfd0d5"/><path d="M.6 6.500L6.800.4" stroke="#f66a68" stroke-width=".75"/></svg>
<div class="row" style="left:615.500px;top:165.3px;"><div class="av" style="left:9.300px;top:3.900px;background:#0e72ed;"><span class="t" style="left:0;width:14.600px;text-align:center;top:4.800px;font-size:5.400px;color:#fff;">C</span></div><span class="n" style="top:8.9px;">Camille</span></div>
<svg style="left:773.5px;top:171.5px" width="7" height="9" viewBox="0 0 7 9"><rect x="2.300" y=".6" width="2.400" height="4.600" rx="1.200" fill="#cdced3"/><path d="M1 3.900a2.500 2.500 0 0 0 5 0M3.500 6.400v1.500M2.300 8h2.400" fill="none" stroke="#cdced3" stroke-width=".7"/><path d="M.3 8.200L6.600.6" stroke="#f66a68" stroke-width=".75"/></svg>
<svg style="left:784.6px;top:172.6px" width="9" height="7" viewBox="0 0 9 7"><rect x=".4" y="1.200" width="5.400" height="4.400" rx=".7" fill="#cfd0d5"/><path d="M6.300 3.400L8.500 1.600v3.600z" fill="#cfd0d5"/><path d="M.6 6.500L6.800.4" stroke="#f66a68" stroke-width=".75"/></svg>
<div class="row" style="left:615.500px;top:187.3px;"><div class="av" style="left:9.300px;top:3.900px;background:#fff;"><svg style="left:0;top:0" width="14.800" height="14.800" viewBox="0 0 28 28"><rect width="28" height="28" fill="#fff"/><path d="M4 6c3-2 6 1 5 3M12 5l5 0M17 4c3-1 6 0 6 3M5 12c0-2 16-4 18 0s2 8-1 10-14 2-16 0-2-8-1-10z" fill="none" stroke="#555" stroke-width="1.200"/><circle cx="10" cy="15" r="1" fill="#333"/><circle cx="17" cy="15" r="1" fill="#333"/><path d="M7 22h13" stroke="#777" stroke-width="1.600" stroke-dasharray="2 1"/></svg></div><span class="n" style="top:8.9px;">cfw</span></div>
<svg style="left:773.5px;top:193.5px" width="7" height="9" viewBox="0 0 7 9"><rect x="2.300" y=".6" width="2.400" height="4.600" rx="1.200" fill="#cdced3"/><path d="M1 3.900a2.500 2.500 0 0 0 5 0M3.500 6.400v1.500M2.300 8h2.400" fill="none" stroke="#cdced3" stroke-width=".7"/><path d="M.3 8.200L6.600.6" stroke="#f66a68" stroke-width=".75"/></svg>
<svg style="left:784.6px;top:194.6px" width="9" height="7" viewBox="0 0 9 7"><rect x=".4" y="1.200" width="5.400" height="4.400" rx=".7" fill="#cfd0d5"/><path d="M6.300 3.400L8.500 1.600v3.600z" fill="#cfd0d5"/><path d="M.6 6.500L6.800.4" stroke="#f66a68" stroke-width=".75"/></svg>
<div class="row" style="left:615.500px;top:209.3px;"><div class="av" style="left:9.300px;top:3.900px;background:#fff;"><svg style="left:0;top:0" width="14.800" height="14.800" viewBox="0 0 28 28"><rect width="28" height="28" fill="#ece6e0"/><g filter="url(#b2)"><ellipse cx="14" cy="15" rx="3" ry="5" fill="#26221f"/><path d="M0 22h28v6H0z" fill="#d8cfc6"/></g></svg></div><span class="n" style="top:8.9px;">Fred</span></div>
<svg style="left:773.5px;top:215.5px" width="7" height="9" viewBox="0 0 7 9"><rect x="2.300" y=".6" width="2.400" height="4.600" rx="1.200" fill="#cdced3"/><path d="M1 3.900a2.500 2.500 0 0 0 5 0M3.500 6.400v1.500M2.300 8h2.400" fill="none" stroke="#cdced3" stroke-width=".7"/><path d="M.3 8.200L6.600.6" stroke="#f66a68" stroke-width=".75"/></svg>
<svg style="left:784.6px;top:216.6px" width="9" height="7" viewBox="0 0 9 7"><rect x=".4" y="1.200" width="5.400" height="4.400" rx=".7" fill="#cfd0d5"/><path d="M6.300 3.400L8.500 1.600v3.600z" fill="#cfd0d5"/><path d="M.6 6.500L6.800.4" stroke="#f66a68" stroke-width=".75"/></svg>
<div class="row" style="left:615.500px;top:231.3px;"><div class="av" style="left:9.300px;top:3.900px;background:#fff;"><svg style="left:0;top:0" width="14.800" height="14.800" viewBox="0 0 28 28"><rect width="28" height="28" fill="#6e4c26"/><g filter="url(#b2)"><path d="M2 10l6-8 12 0 6 8-2 12-10 4-10-4z" fill="#a87838"/><path d="M8 13l12 0 2 9-8 4-8-4z" fill="#dcc090"/><ellipse cx="14" cy="20" rx="4.500" ry="4" fill="#1c1410"/><ellipse cx="14" cy="14.500" rx="2.200" ry="1.500" fill="#1c1410"/><circle cx="9.500" cy="9.500" r="1.600" fill="#1c1410"/><circle cx="18.500" cy="9.500" r="1.600" fill="#1c1410"/><path d="M22 8l5 4 0 10-4 0z" fill="#3a2614"/></g></svg></div><span class="n" style="top:8.9px;">GoNiku</span></div>
<svg style="left:773.5px;top:237.5px" width="7" height="9" viewBox="0 0 7 9"><rect x="2.300" y=".6" width="2.400" height="4.600" rx="1.200" fill="#cdced3"/><path d="M1 3.900a2.500 2.500 0 0 0 5 0M3.500 6.400v1.500M2.300 8h2.400" fill="none" stroke="#cdced3" stroke-width=".7"/><path d="M.3 8.200L6.600.6" stroke="#f66a68" stroke-width=".75"/></svg>
<svg style="left:784.6px;top:238.6px" width="9" height="7" viewBox="0 0 9 7"><rect x=".4" y="1.200" width="5.400" height="4.400" rx=".7" fill="#cfd0d5"/><path d="M6.300 3.400L8.500 1.600v3.600z" fill="#cfd0d5"/><path d="M.6 6.500L6.800.4" stroke="#f66a68" stroke-width=".75"/></svg>
<div class="row" style="left:615.500px;top:253.3px;"><div class="av" style="left:9.300px;top:3.900px;background:#fff;"><svg style="left:0;top:0" width="14.800" height="14.800" viewBox="0 0 28 28"><rect width="28" height="28" fill="url(#sun)"/><g filter="url(#b2)"><ellipse cx="14" cy="6.500" rx="5" ry="1.600" fill="#fff0b0"/><path d="M0 19c6-3 10 1 14-1s8-2 14 0v4c-6-1-10 2-14 2S4 22 0 23z" fill="#f4f2f0"/></g></svg></div><span class="n" style="top:8.9px;">Guiyang</span></div>
<svg style="left:773.5px;top:259.5px" width="7" height="9" viewBox="0 0 7 9"><rect x="2.300" y=".6" width="2.400" height="4.600" rx="1.200" fill="#cdced3"/><path d="M1 3.900a2.500 2.500 0 0 0 5 0M3.500 6.400v1.500M2.300 8h2.400" fill="none" stroke="#cdced3" stroke-width=".7"/><path d="M.3 8.200L6.600.6" stroke="#f66a68" stroke-width=".75"/></svg>
<svg style="left:784.6px;top:260.6px" width="9" height="7" viewBox="0 0 9 7"><rect x=".4" y="1.200" width="5.400" height="4.400" rx=".7" fill="#cfd0d5"/><path d="M6.300 3.400L8.500 1.600v3.600z" fill="#cfd0d5"/><path d="M.6 6.500L6.800.4" stroke="#f66a68" stroke-width=".75"/></svg>
<div class="row" style="left:615.500px;top:275.3px;"><div class="av" style="left:9.300px;top:3.900px;background:#fff;"><svg style="left:0;top:0" width="14.800" height="14.800" viewBox="0 0 28 28"><rect width="28" height="28" fill="#5a5a9a"/><g filter="url(#b2)"><rect width="28" height="10" fill="#7a80c0"/><path d="M0 14l8-5 8 4 12-5v20H0z" fill="#4a4680"/><path d="M0 20l10-3 18 4v7H0z" fill="#7a6aa8"/></g></svg></div><span class="n" style="top:8.9px;">hongyi</span></div>
<svg style="left:773.5px;top:281.5px" width="7" height="9" viewBox="0 0 7 9"><rect x="2.300" y=".6" width="2.400" height="4.600" rx="1.200" fill="#cdced3"/><path d="M1 3.900a2.500 2.500 0 0 0 5 0M3.500 6.400v1.500M2.300 8h2.400" fill="none" stroke="#cdced3" stroke-width=".7"/><path d="M.3 8.200L6.600.6" stroke="#f66a68" stroke-width=".75"/></svg>
<svg style="left:784.6px;top:282.6px" width="9" height="7" viewBox="0 0 9 7"><rect x=".4" y="1.200" width="5.400" height="4.400" rx=".7" fill="#cfd0d5"/><path d="M6.300 3.400L8.500 1.600v3.600z" fill="#cfd0d5"/><path d="M.6 6.500L6.800.4" stroke="#f66a68" stroke-width=".75"/></svg>
<div class="row" style="left:615.500px;top:297.3px;"><div class="av" style="left:9.300px;top:3.900px;background:#fff;"><svg style="left:0;top:0" width="14.800" height="14.800" viewBox="0 0 28 28"><rect width="28" height="28" fill="#fff"/><rect x="2" y="2" width="22" height="18" rx="3" fill="#3fc0f4"/><path d="M4 18h8l-6 6z" fill="#3fc0f4"/><path d="M15 20l9-1 0-6z" fill="#2aa4e6"/><path d="M18 22l7-1-4 5z" fill="#e8503e"/><path d="M10 23l3 2 4-4-1 5-4 1z" fill="#35b34a"/></svg></div><span class="n" style="top:8.9px;">HYQ</span></div>
<svg style="left:773.5px;top:303.5px" width="7" height="9" viewBox="0 0 7 9"><rect x="2.300" y=".6" width="2.400" height="4.600" rx="1.200" fill="#cdced3"/><path d="M1 3.900a2.500 2.500 0 0 0 5 0M3.500 6.400v1.500M2.300 8h2.400" fill="none" stroke="#cdced3" stroke-width=".7"/><path d="M.3 8.200L6.600.6" stroke="#f66a68" stroke-width=".75"/></svg>
<svg style="left:784.6px;top:304.6px" width="9" height="7" viewBox="0 0 9 7"><rect x=".4" y="1.200" width="5.400" height="4.400" rx=".7" fill="#cfd0d5"/><path d="M6.300 3.400L8.500 1.600v3.600z" fill="#cfd0d5"/><path d="M.6 6.500L6.800.4" stroke="#f66a68" stroke-width=".75"/></svg>
<div class="row" style="left:615.500px;top:319.3px;"><div class="av" style="left:9.300px;top:3.900px;background:#fff;"><svg style="left:0;top:0" width="14.800" height="14.800" viewBox="0 0 28 28"><rect width="28" height="28" fill="#3aa86a"/><g filter="url(#b2)"><circle cx="14" cy="14" r="9" fill="#7fd0a0"/><path d="M9 8h2v12H9zM13 7h2v14h-2zM17 8h2v12h-2z" fill="#2f8a58"/></g></svg></div><span class="n" style="top:8.9px;">Jameslu001</span></div>
<svg style="left:773.5px;top:325.5px" width="7" height="9" viewBox="0 0 7 9"><rect x="2.300" y=".6" width="2.400" height="4.600" rx="1.200" fill="#cdced3"/><path d="M1 3.900a2.500 2.500 0 0 0 5 0M3.500 6.400v1.500M2.300 8h2.400" fill="none" stroke="#cdced3" stroke-width=".7"/><path d="M.3 8.200L6.600.6" stroke="#f66a68" stroke-width=".75"/></svg>
<svg style="left:784.6px;top:326.6px" width="9" height="7" viewBox="0 0 9 7"><rect x=".4" y="1.200" width="5.400" height="4.400" rx=".7" fill="#cfd0d5"/><path d="M6.300 3.400L8.500 1.600v3.600z" fill="#cfd0d5"/><path d="M.6 6.500L6.800.4" stroke="#f66a68" stroke-width=".75"/></svg>
<div class="row" style="left:615.500px;top:341.3px;"><div class="av" style="left:9.300px;top:3.900px;background:#fff;"><svg style="left:0;top:0" width="14.800" height="14.800" viewBox="0 0 28 28"><rect width="28" height="28" fill="#fff"/><path d="M9 5l5 6 5-6M14 11l-5 11M14 11l5 11" fill="none" stroke="#2aa84a" stroke-width="2"/><path d="M11 14h6l2 7h-10z" fill="#1a1a1a"/><path d="M10 25h8" stroke="#333" stroke-width="1.600"/></svg></div><span class="n" style="top:8.9px;">Karol</span></div>
<svg style="left:773.5px;top:347.5px" width="7" height="9" viewBox="0 0 7 9"><rect x="2.300" y=".6" width="2.400" height="4.600" rx="1.200" fill="#cdced3"/><path d="M1 3.900a2.500 2.500 0 0 0 5 0M3.500 6.400v1.500M2.300 8h2.400" fill="none" stroke="#cdced3" stroke-width=".7"/><path d="M.3 8.200L6.600.6" stroke="#f66a68" stroke-width=".75"/></svg>
<svg style="left:784.6px;top:348.6px" width="9" height="7" viewBox="0 0 9 7"><rect x=".4" y="1.200" width="5.400" height="4.400" rx=".7" fill="#cfd0d5"/><path d="M6.300 3.400L8.500 1.600v3.600z" fill="#cfd0d5"/><path d="M.6 6.500L6.800.4" stroke="#f66a68" stroke-width=".75"/></svg>
<div class="row" style="left:615.500px;top:363.3px;"><div class="av" style="left:9.300px;top:3.900px;background:#0e72ed;"><span class="t" style="left:0;width:14.600px;text-align:center;top:4.800px;font-size:5.400px;color:#fff;">K</span></div><span class="n" style="top:8.9px;">KevinChan</span></div>
<svg style="left:773.5px;top:369.5px" width="7" height="9" viewBox="0 0 7 9"><rect x="2.300" y=".6" width="2.400" height="4.600" rx="1.200" fill="#cdced3"/><path d="M1 3.900a2.500 2.500 0 0 0 5 0M3.500 6.400v1.500M2.300 8h2.400" fill="none" stroke="#cdced3" stroke-width=".7"/><path d="M.3 8.200L6.600.6" stroke="#f66a68" stroke-width=".75"/></svg>
<svg style="left:784.6px;top:370.6px" width="9" height="7" viewBox="0 0 9 7"><rect x=".4" y="1.200" width="5.400" height="4.400" rx=".7" fill="#cfd0d5"/><path d="M6.300 3.400L8.500 1.600v3.600z" fill="#cfd0d5"/><path d="M.6 6.500L6.800.4" stroke="#f66a68" stroke-width=".75"/></svg>
<div class="row" style="left:615.500px;top:385.3px;"><div class="av" style="left:9.300px;top:3.900px;background:#0e72ed;"><span class="t" style="left:0;width:14.600px;text-align:center;top:4.800px;font-size:5.400px;color:#fff;">K</span></div><span class="n" style="top:8.9px;">kaude</span></div>
<svg style="left:773.5px;top:391.5px" width="7" height="9" viewBox="0 0 7 9"><rect x="2.300" y=".6" width="2.400" height="4.600" rx="1.200" fill="#cdced3"/><path d="M1 3.900a2.500 2.500 0 0 0 5 0M3.500 6.400v1.500M2.300 8h2.400" fill="none" stroke="#cdced3" stroke-width=".7"/><path d="M.3 8.200L6.600.6" stroke="#f66a68" stroke-width=".75"/></svg>
<svg style="left:784.6px;top:392.6px" width="9" height="7" viewBox="0 0 9 7"><rect x=".4" y="1.200" width="5.400" height="4.400" rx=".7" fill="#cfd0d5"/><path d="M6.300 3.400L8.500 1.600v3.600z" fill="#cfd0d5"/><path d="M.6 6.500L6.800.4" stroke="#f66a68" stroke-width=".75"/></svg>
<div class="abs" style="left:615.500px;top:396.500px;width:182.500px;height:29.500px;background:#fff;border-top:.5px solid #e4e5e8;box-sizing:border-box;"></div>
<div class="abs" style="left:796px;top:364.200px;width:2px;height:24.300px;background:#8f8a86;border-radius:1px;"></div>

<!-- BOTTOM TOOLBAR -->
<div class="abs" id="bottom"></div>
<!-- mute -->
<svg style="left:11.800px;top:403.200px" width="9" height="12" viewBox="0 0 9 12"><rect x="2.700" y=".4" width="3.600" height="6.600" rx="1.800" fill="#3a3b3e"/><path d="M1 5.200a3.500 3.500 0 0 0 7 0M4.500 8.800v2M2.600 11h3.800" fill="none" stroke="#3a3b3e" stroke-width=".9"/><path d="M.6 10.300L8.400 1" stroke="#f0443c" stroke-width="1.100"/></svg>
<div class="bl" style="left:16.200px;">解除静音</div>
<svg style="left:30.300px;top:411.600px" width="5" height="3.500" viewBox="0 0 5 3.500"><path d="M.5 3L2.500 .9 4.500 3" fill="none" stroke="#444" stroke-width=".8"/></svg>
<!-- video -->
<svg style="left:42.800px;top:404.600px" width="13" height="9.500" viewBox="0 0 13 9.500"><rect x=".3" y="1.300" width="8.400" height="7" rx="1" fill="#3a3b3e"/><path d="M9.300 4.800L12.600 2v5.800z" fill="#3a3b3e"/><path d="M1.200 9L9.600.6" stroke="#f0443c" stroke-width="1.100"/></svg>
<div class="bl" style="left:49.300px;">开启视频</div>
<svg style="left:63px;top:411.600px" width="5" height="3.500" viewBox="0 0 5 3.500"><path d="M.5 3L2.500 .9 4.500 3" fill="none" stroke="#444" stroke-width=".8"/></svg>
<!-- share -->
<svg style="left:213.400px;top:405.400px" width="12" height="9.500" viewBox="0 0 12 9.500"><rect x=".2" y=".2" width="11.600" height="7" rx=".8" fill="#35363a"/><rect x="3" y="8.300" width="6" height="1" fill="#35363a"/><path d="M4 5.300c.8-1.600 2-2.200 3.200-2.200V2l2 1.800-2 1.800V4.400c-1.200 0-2.200.2-3.200.9z" fill="#fff"/></svg>
<div class="bl" style="left:219.200px;">共享屏幕</div>
<svg style="left:233.300px;top:411.300px" width="5" height="3.500" viewBox="0 0 5 3.500"><path d="M.5 3L2.500 .9 4.500 3" fill="none" stroke="#444" stroke-width=".8"/></svg>
<!-- invite -->
<svg style="left:247.600px;top:404.600px" width="11" height="10" viewBox="0 0 11 10"><circle cx="4.300" cy="2" r="1.900" fill="#35363a"/><path d="M.3 9.600C.3 6.400 2.200 5 4.300 5S8.300 6.400 8.300 9.600z" fill="#35363a"/><circle cx="8.400" cy="7.400" r="2.300" fill="#35363a" stroke="#fff" stroke-width=".6"/><path d="M8.400 6.200v2.400M7.200 7.400h2.400" stroke="#fff" stroke-width=".7"/></svg>
<div class="bl" style="left:252.300px;">邀请</div>
<!-- members -->
<svg style="left:276px;top:404.400px" width="11.500" height="10" viewBox="0 0 11.500 10"><circle cx="5.750" cy="2.200" r="2.100" fill="#35363a"/><path d="M.3 9.700C.3 6.400 3 5.200 5.750 5.200s5.450 1.200 5.450 4.500z" fill="#35363a"/></svg>
<div class="bl" style="left:281px;">成员(99+)</div>
<!-- chat -->
<svg style="left:305px;top:406.200px" width="10" height="9.500" viewBox="0 0 10 9.500"><path d="M1 .2h8a.8.8 0 0 1 .8.800v5.400a.8.800 0 0 1-.8.800H7.400v2L5 7.200H1a.8.800 0 0 1-.8-.8V1A.8.800 0 0 1 1 .2z" fill="#35363a"/><circle cx="2.800" cy="3.700" r=".7" fill="#fff"/><circle cx="5" cy="3.700" r=".7" fill="#fff"/><circle cx="7.200" cy="3.700" r=".7" fill="#fff"/></svg>
<div class="bl" style="left:309.800px;">聊天</div>
<!-- record -->
<svg style="left:334.400px;top:403.400px" width="12" height="12" viewBox="0 0 12 12"><circle cx="6" cy="6" r="5.300" fill="none" stroke="#35363a" stroke-width=".9"/><circle cx="6" cy="6" r="3.700" fill="#35363a"/></svg>
<div class="bl" style="left:340.400px;">录制</div>
<!-- apps -->
<svg style="left:366.300px;top:404.300px" width="10.500" height="10" viewBox="0 0 10.500 10"><rect x=".2" y=".4" width="4.200" height="4.200" rx=".6" fill="#35363a"/><rect x=".2" y="5.600" width="4.200" height="4.200" rx=".6" fill="#35363a"/><rect x="5.600" y="5.600" width="4.200" height="4.200" rx=".6" fill="#35363a"/><rect x="5.900" y=".5" width="3.400" height="3.400" rx=".4" transform="rotate(45 7.600 2.200)" fill="#fff" stroke="#35363a" stroke-width=".8"/></svg>
<div class="bl" style="left:371.400px;">应用</div>
<!-- settings -->
<svg style="left:393.500px;top:403.800px" width="11" height="11" viewBox="0 0 11 11"><path d="M10.82 4.57L10.82 6.43L9.45 6.58L9.06 7.53L9.92 8.61L8.61 9.92L7.53 9.06L6.58 9.45L6.43 10.82L4.57 10.82L4.42 9.45L3.47 9.06L2.39 9.92L1.08 8.61L1.94 7.53L1.55 6.58L0.18 6.43L0.18 4.57L1.55 4.42L1.94 3.47L1.08 2.39L2.39 1.08L3.47 1.94L4.42 1.55L4.57 0.18L6.43 0.18L6.58 1.55L7.53 1.94L8.61 1.08L9.92 2.39L9.06 3.47L9.45 4.42z" fill="#35363a" transform="rotate(22.500 5.500 5.500)"/><circle cx="5.500" cy="5.500" r="2" fill="#fff"/></svg>
<div class="bl" style="left:399px;">设置</div>
<!-- leave -->
<div class="abs" style="left:571.600px;top:404.300px;width:38.600px;height:18.400px;box-sizing:border-box;border:.8px solid #f77;border-radius:2.500px;background:#fff;"></div>
<div class="t" style="left:577.800px;top:410.200px;font-size:6.400px;color:#f2353a;">离开会议</div>
<!-- speaking toast -->
<div class="abs" style="left:678.800px;top:400.200px;width:119.200px;height:17.400px;background:#2d3035;border-radius:2px 0 0 2px;"></div>
<svg style="left:683.500px;top:404.500px" width="7" height="9" viewBox="0 0 7 9"><rect x="2.300" y=".6" width="2.400" height="4.600" rx="1.200" fill="#9a9ca2"/><path d="M1 3.900a2.500 2.500 0 0 0 5 0M3.500 6.400v1.500M2.300 8h2.400" fill="none" stroke="#9a9ca2" stroke-width=".7"/><path d="M.3 8.200L6.600.6" stroke="#f66a68" stroke-width=".75"/></svg>
<div class="t" style="left:700.600px;top:405.800px;font-size:6.200px;color:#fff;">正在讲话: 王大维</div>
<!-- date tooltip -->
<div class="abs" style="left:739px;top:405px;width:46.500px;height:15px;background:#e9ebee;border-radius:1.500px;box-shadow:0 .5px 2px rgba(0,0,0,.35);"></div>
<div class="t" style="left:743.800px;top:409.600px;font-size:6px;color:#222;">2022年5月6日</div>
</body>
</html>
